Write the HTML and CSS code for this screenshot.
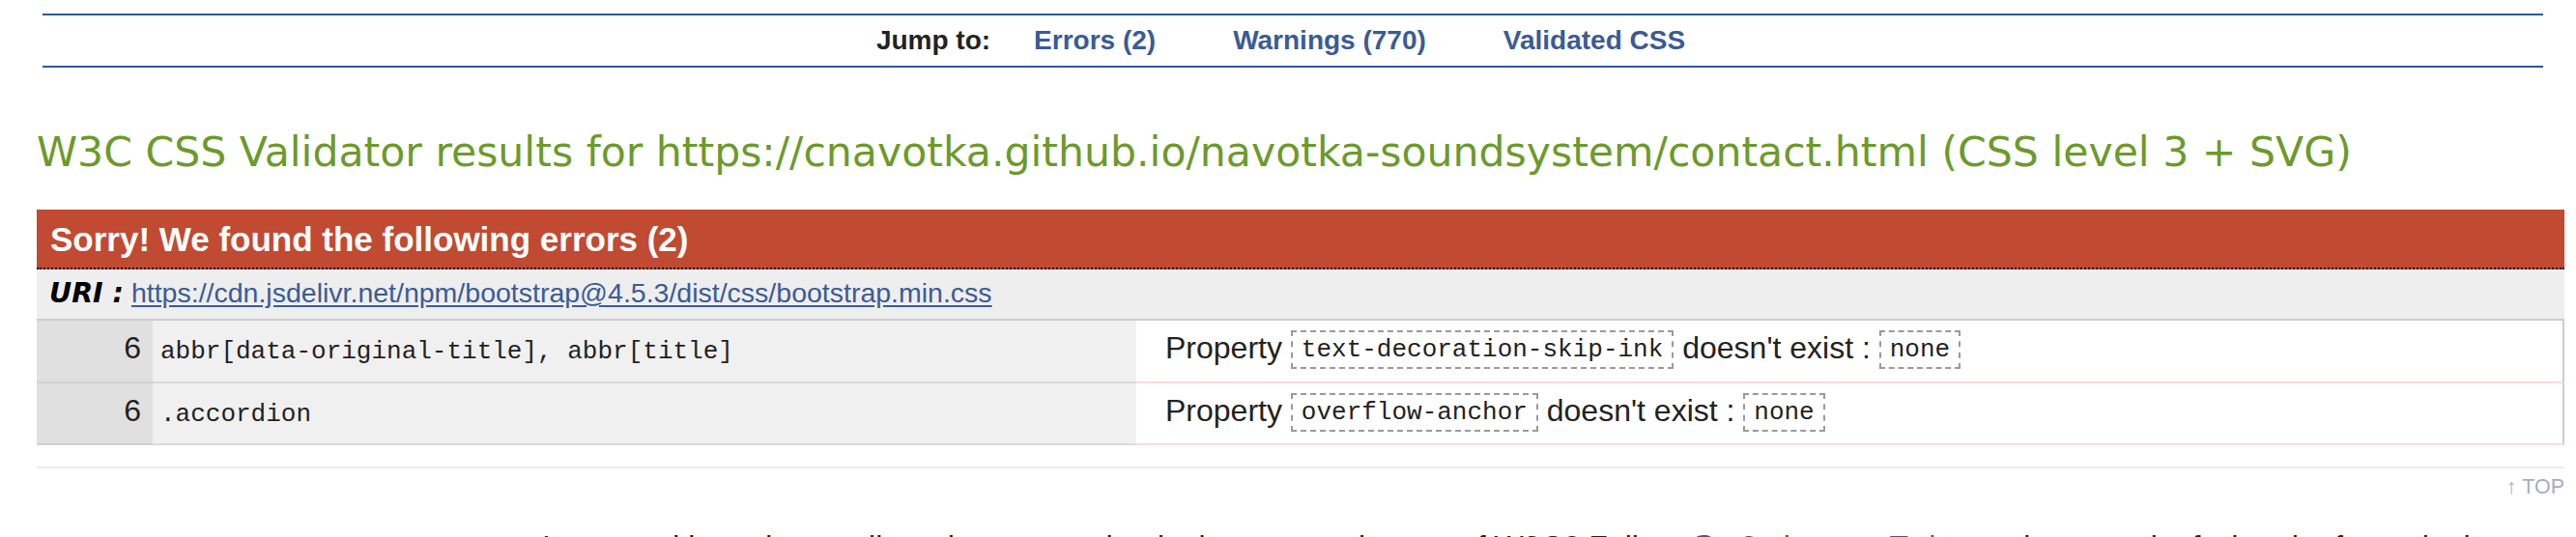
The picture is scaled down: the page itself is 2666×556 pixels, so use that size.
FILE: index.html
```html
<!DOCTYPE html>
<html lang="en">
<head>
<meta charset="utf-8">
<title>W3C CSS Validator results</title>
<link rel="stylesheet" href="styles.css">
</head>
<body>
<div class="page">
  <nav class="jumpbar">
    <strong class="jump-label">Jump to:</strong>
    <a class="jump-link" href="#errors">Errors (2)</a>
    <a class="jump-link" href="#warnings">Warnings (770)</a>
    <a class="jump-link" href="#css">Validated CSS</a>
  </nav>

  <h2 class="title">W3C CSS Validator results for <a class="title-uri" href="#">https://cnavotka.github.io/navotka-soundsystem/contact.html</a> (CSS level 3 + SVG)</h2>

  <section id="errors" class="errors">
    <h3 class="errors-head">Sorry! We found the following errors (2)</h3>
    <h4 class="uri-row"><span class="uri-label">URI :</span> <a class="uri-link" href="#">https://cdn.jsdelivr.net/npm/bootstrap@4.5.3/dist/css/bootstrap.min.css</a></h4>
    <table class="err-table">
      <colgroup>
        <col class="col-ln">
        <col class="col-ctx">
        <col>
      </colgroup>
      <tr>
        <td class="ln">6</td>
        <td class="ctx">abbr[data-original-title], abbr[title]</td>
        <td class="msg">Property <code class="kw">text-decoration-skip-ink</code> doesn't exist : <code class="kw">none</code></td>
      </tr>
      <tr>
        <td class="ln">6</td>
        <td class="ctx">.accordion</td>
        <td class="msg">Property <code class="kw">overflow-anchor</code> doesn't exist : <code class="kw">none</code></td>
      </tr>
    </table>
  </section>

  <div class="totop"><a href="#">↑ TOP</a></div>

  <p class="devnews">Interested in understanding what new technologies are coming out of W3C? Follow <a href="#">@w3cdevs</a> on <a href="#">Twitter</a> to keep track of what the future looks like!</p>
</div>
</body>
</html>
```

FILE: styles.css
```css
html, body {
  margin: 0;
  padding: 0;
  background: #ffffff;
}

body {
  font-family: "Liberation Sans", Arial, Helvetica, sans-serif;
  color: #222222;
}

.page {
  margin: 0 12px 0 38px;
}

/* Jump bar */
.jumpbar {
  display: flex;
  justify-content: center;
  align-items: baseline;
  margin: 14px 22px 0 6px;
  padding-right: 25px;
  height: 52px;
  line-height: 52px;
  border-top: 2px solid #2b5a98;
  border-bottom: 2px solid #2b5a98;
  font-family: "Liberation Sans", Arial, sans-serif;
  font-weight: bold;
  font-size: 28px;
}

.jump-label {
  color: #222222;
  margin-right: 45px;
}

.jump-link {
  color: #3a5b96;
  text-decoration: none;
}

.jump-link + .jump-link {
  margin-left: 80px;
}

/* Title */
.title {
  margin: 61.6px 0 0 0;
  font-family: "DejaVu Sans", Verdana, sans-serif;
  font-weight: normal;
  font-size: 42.6px;
  line-height: normal;
  color: #6c9a2b;
  white-space: nowrap;
}

.title-uri {
  color: inherit;
  text-decoration: none;
}

/* Errors */
.errors {
  margin-top: 35px;
  padding-bottom: 22px;
  border-bottom: 2px solid #ebebfa;
}

.errors-head {
  margin: 0;
  padding: 11px 14px 9px 14px;
  line-height: 40px;
  font-family: "Liberation Sans", Arial, sans-serif;
  font-weight: bold;
  font-size: 35px;
  color: #ffffff;
  background: #c14a32;
  border-bottom: 2px dotted #000000;
}

.uri-row {
  margin: 0;
  padding: 8.5px 13px 10.3px 13px;
  background: #eeeeee;
  border-bottom: 2px solid #cccccc;
  font-family: "Liberation Sans", Arial, sans-serif;
  font-weight: normal;
  font-size: 28.5px;
  line-height: normal;
}

.uri-label {
  font-family: "DejaVu Sans", Verdana, sans-serif;
  font-weight: bold;
  font-style: italic;
  color: #000000;
}

.uri-link {
  color: #3a5b97;
  text-decoration: underline;
  text-underline-offset: 3px;
}

.err-table {
  width: 100%;
  table-layout: fixed;
  border-collapse: separate;
  border-spacing: 0;
}

.col-ln {
  width: 120px;
}

.col-ctx {
  width: 1018px;
}

.err-table td {
  padding-top: 10px;
  padding-bottom: 12.3px;
  vertical-align: baseline;
  border-bottom: 2px solid #d8d8d8;
}

.err-table td.ln {
  background: #e0e0e0;
  text-align: right;
  padding-left: 0;
  padding-right: 12px;
  font-family: "Liberation Sans", Arial, sans-serif;
  font-size: 32px;
  color: #222222;
  border-bottom-color: #d0d0d0;
}

.err-table td.ctx {
  background: #f0f0f0;
  padding-left: 8px;
  padding-right: 8px;
  font-family: "Liberation Mono", "Courier New", monospace;
  font-size: 26px;
  color: #222222;
  white-space: nowrap;
  border-bottom-color: #dadada;
}

.err-table td.msg {
  background: #ffffff;
  padding-left: 30px;
  padding-right: 10px;
  font-family: "Liberation Sans", Arial, sans-serif;
  font-size: 32px;
  color: #222222;
  white-space: nowrap;
  border-bottom-color: #f6dddd;
  border-right: 2px solid #cccccc;
}

.kw {
  display: inline-block;
  padding: 0 9px;
  line-height: 36px;
  border: 2px dashed #9a9a9a;
  font-family: "Liberation Mono", "Courier New", monospace;
  font-size: 26px;
  color: #222222;
  vertical-align: 2px;
}

/* Back to top */
.totop {
  margin-top: 7px;
  text-align: right;
  font-family: "Liberation Sans", Arial, sans-serif;
  font-size: 21.5px;
  line-height: normal;
}

.totop a {
  color: #a9abc4;
  text-decoration: none;
}

/* Dev news */
.devnews {
  margin: 30.8px 0 0 0;
  padding-left: 523px;
  padding-right: 50px;
  font-family: "Liberation Sans", Arial, sans-serif;
  font-size: 32px;
  line-height: normal;
  color: #222222;
}

.devnews a {
  color: #3a5b97;
  text-decoration: none;
}
```
